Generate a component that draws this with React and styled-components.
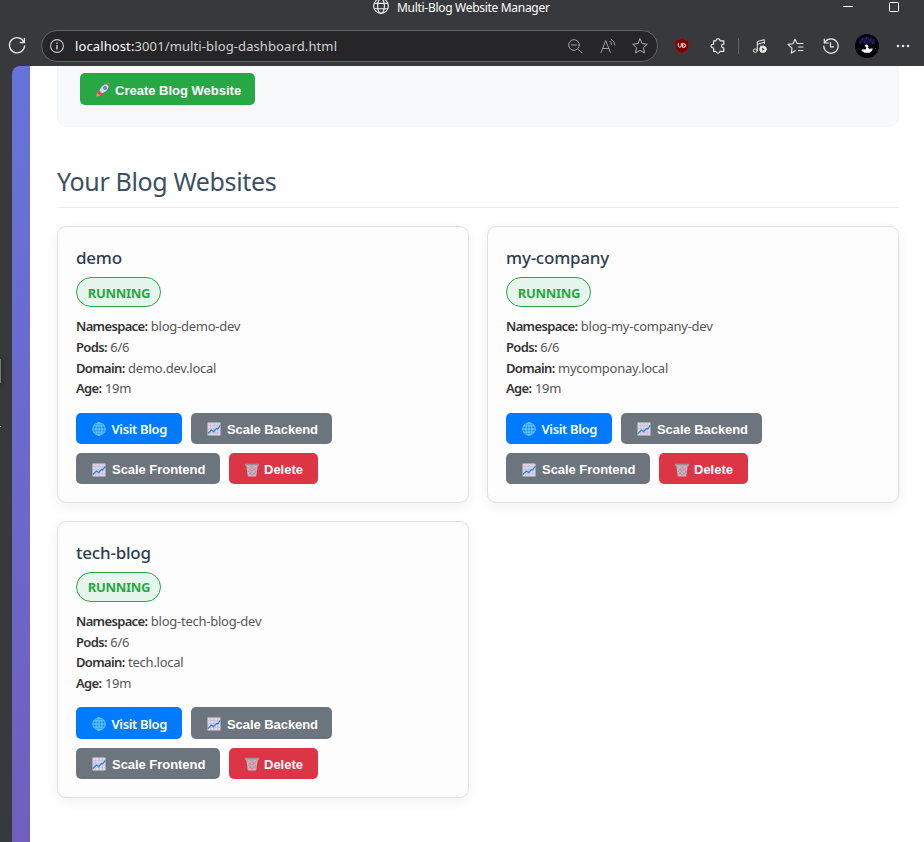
import React from 'react';
import styled, { createGlobalStyle } from 'styled-components';

const GlobalStyle = createGlobalStyle`
  * { box-sizing: border-box; }
  body { margin: 0; overflow: hidden; background: #38393c; font-family: "Noto Sans", "Open Sans", sans-serif; }
  svg { display: block; flex: none; fill: none; overflow: visible; }
`;

const Browser = styled.div`
  width: 924px;
  height: 842px;
  overflow: hidden;
  display: flex;
  flex-direction: column;
  background: #38393c;
`;
const TitleBar = styled.header`
  height: 30px;
  flex: none;
  display: flex;
  align-items: flex-start;
  padding-left: 373px;
  color: #fff;
`;
const TabTitle = styled.span`
  margin-left: 8px;
  flex: 1;
  white-space: nowrap;
  font-size: 12px;
  line-height: 15px;
  letter-spacing: -0.3px;
`;
const WindowButtons = styled.div`
  display: flex;
  gap: 34px;
  padding-right: 24px;
`;
const Toolbar = styled.nav`
  height: 36px;
  flex: none;
  display: flex;
  align-items: flex-start;
  padding-left: 8px;
`;
const IconSlot = styled.span`
  display: flex;
  align-items: center;
  justify-content: center;
  flex: none;
  height: 32px;
  width: ${(p) => p.$w}px;
  color: ${(p) => p.$color || '#e6e6e6'};
`;
const AddressBar = styled.div`
  width: 617px;
  height: 32px;
  margin-left: 15px;
  padding-right: 1px;
  flex: none;
  display: flex;
  align-items: center;
  border: 1px solid #626365;
  border-radius: 16px;
  background: #262628;
`;
const Url = styled.span`
  flex: 1;
  margin-left: 3px;
  white-space: nowrap;
  font-size: 13px;
  color: #d2d2d2;
  letter-spacing: 0.11px;
  b { font-weight: 400; color: #fff; }
`;
const Divider = styled.span`
  width: 1px;
  height: 16px;
  background: #626365;
`;
const Main = styled.div`
  flex: 1;
  min-height: 0;
  display: flex;
`;
const SideStrip = styled.div`
  width: 12px;
  flex: none;
  display: flex;
  flex-direction: column;
  padding-top: 293px;
`;
const Handle = styled.span`
  width: 1px;
  height: 24px;
  background: #77787a;
  box-shadow: 0 0 5px 1px #202022;
`;
const Tick = styled.span`
  width: 1px;
  height: 1px;
  margin-top: 43px;
  background: #b0b0b0;
`;
const Viewport = styled.div`
  flex: 1;
  padding-left: 18px;
  border-radius: 8px 0 0 0;
  overflow: hidden;
  background: linear-gradient(#6773d9, #705fbd);
`;
const Page = styled.main`
  height: 100%;
  padding: 0 25px 0 27px;
  background: #fff;
`;
const FormPanel = styled.section`
  height: 61px;
  padding: 7px 22px 0;
  background: #f8f9fb;
  border: 1px solid #f5f6f8;
  border-top: 0;
  border-radius: 0 0 10px 10px;
`;
const SectionTitle = styled.h2`
  height: 42px;
  margin: 39px 0 18px;
  border-bottom: 1px solid #ececec;
  font-size: 25px;
  font-weight: 400;
  line-height: 31px;
  letter-spacing: -0.36px;
  white-space: nowrap;
  color: #3b5064;
`;
const Grid = styled.div`
  display: grid;
  grid-template-columns: 412px 412px;
  gap: 18px;
`;
const Card = styled.article`
  height: 276.8px;
  padding: 18px;
  border: 1px solid #dfe0e2;
  border-radius: 9px;
  background: #fdfdfd;
  box-shadow: 0 4px 13px rgba(0, 0, 0, 0.06);
`;
const CardName = styled.h3`
  margin: 0 0 7px;
  height: 25px;
  line-height: 26px;
  font-size: 17px;
  font-weight: 500;
  letter-spacing: -0.22px;
  color: #2c3e50;
`;
const Status = styled.div`
  width: 85px;
  height: 30px;
  display: flex;
  align-items: center;
  justify-content: center;
  padding: 1px 0 0 1px;
  border: 1px solid #28a745;
  border-radius: 15px;
  background: #e6f6ec;
  color: #28a745;
  font-size: 13px;
  font-weight: 700;
  letter-spacing: -0.3px;
`;
const Details = styled.div`
  margin: 9px 0 13.6px;
  padding-top: 0.2px;
  font-size: 13px;
  line-height: 20.7px;
  letter-spacing: -0.25px;
  color: #555;
  strong { font-weight: 600; color: #333; letter-spacing: -0.65px; margin-right: 0.3px; }
`;
const Actions = styled.div`
  display: flex;
  flex-wrap: wrap;
  gap: 9px;
`;
const fills = { primary: '#007bff', neutral: '#6c757d', danger: '#dc3545', success: '#28a745' };
const Button = styled.button`
  width: ${(p) => p.$w}px;
  height: ${(p) => p.$h || 31.3}px;
  display: flex;
  align-items: center;
  gap: ${(p) => p.$gap || 5}px;
  padding: ${(p) => (p.$humanist ? 1 : 2)}px 0 0 16px;
  border: 0;
  border-radius: 5px;
  background: ${(p) => fills[p.$tone]};
  color: #fff;
  white-space: nowrap;
  font-family: ${(p) => (p.$humanist ? '"Noto Sans", sans-serif' : '"Liberation Sans", Arial, sans-serif')};
  font-size: 13px;
  font-weight: ${(p) => (p.$humanist ? 600 : 700)};
  letter-spacing: ${(p) => p.$track || 0}px;
`;

const Svg = ({ s = 16, w, h, vb, sw = 1, children }) => (
  <svg width={w || s} height={h || s} viewBox={vb || `0 0 ${w || s} ${h || s}`} stroke="currentColor" strokeWidth={sw} strokeLinecap="round" strokeLinejoin="round">
    {children}
  </svg>
);
const TabGlobe = () => (
  <svg width="16" height="14" viewBox="0 0 16 14" stroke="#f2f2f2" strokeWidth="1.1">
    <circle cx="8" cy="6" r="7.4" />
    <ellipse cx="8" cy="6" rx="3.4" ry="7.4" />
    <path d="M1.2 3.4h13.6M1.2 8.8h13.6" />
  </svg>
);
const Reload = () => (
  <Svg s={18} sw={1.3}><path d="M16 5.2A7.6 7.6 0 1 0 16.6 9M16.4 1.3v4.2h-4.2" /></Svg>
);
const Info = () => (
  <Svg s={14} sw={1.1}><circle cx="7" cy="7" r="6.4" /><path d="M7 6.5v3.4M7 4v.2" strokeWidth="1.5" /></Svg>
);
const ZoomOut = () => (
  <Svg s={15}><circle cx="6" cy="6" r="5.3" /><path d="M10 10l4 4M3.5 6h5" /></Svg>
);
const ReadAloud = () => (
  <Svg s={16}><path d="M1 14.5L5.7 2.5l4.7 12M2.7 10.5h6M10 3.2a4 4 0 0 1 1.5 3.3M10.9 1.1a7 7 0 0 1 4 6" /></Svg>
);
const starPath = 'M8 .9l2.2 4.7 5.1.6-3.8 3.5 1 5.2L8 12.4l-4.5 2.5 1-5.2L.7 6.2l5.1-.6z';
const Star = () => <Svg s={16}><path d={starPath} /></Svg>;
const Shield = () => (
  <Svg w={14} h={16}>
    <path d="M7 .7c2 1.4 4 1.8 6.4 1.8v5.7c0 3.4-2.7 5.4-6.4 7.2C3.3 13.6.6 11.6.6 8.2V2.5C3 2.5 5 2.1 7 .7z" fill="#7d0000" stroke="#9b1414" strokeWidth=".7" />
    <path d="M3.3 5.7v2a1.500 1.500 0 0 0 3 0v-2M7.700 5.700v3.600h1.100a1.800 1.800 0 0 0 0-3.600z" stroke="#fff" strokeWidth="1" />
  </Svg>
);
const Puzzle = () => (
  <Svg s={16} sw={1.2}><path d="M3.600 2.800h2.300c.3-2.600 3.900-2.600 4.200 0h3.700v3.400c-3-.6-3 4.200 0 3.600v3.500h-3.700c-.3 2.600-3.900 2.600-4.200 0H3.600V10C.2 10 .2 6.200 3.600 6.200z" /></Svg>
);
const Music = () => (
  <Svg s={16} sw={1}>
    <ellipse cx="3.3" cy="12.6" rx="2" ry="1.7" />
    <path d="M5.300 12.500V3.600l7-2v4M5.300 6.300l7-2M9 8v3" />
    <circle cx="11" cy="11.2" r="3.3" fill="currentColor" />
    <path d="M10.200 9.700v3l2.300-1.500z" fill="#38393c" stroke="none" />
  </Svg>
);
const Favorites = () => (
  <Svg w={17} h={16} sw={1.1}><path d="M8.200 12.700L4.300 15l.7-4.900L1 6.400l4.900-.6L8 1.200l2 4M10 5.500h6M11.500 9h4.500M11.500 12.500h4.500" /></Svg>
);
const History = () => (
  <Svg s={16} sw={1.2}><path d="M2.200 3.800A7.200 7.200 0 1 1 .8 8M1.300 1v4h4M7.500 4.500v4.400h3" /></Svg>
);
const Avatar = () => (
  <svg width="24" height="24" viewBox="0 0 24 24">
    <circle cx="12" cy="12" r="12" fill="#050507" />
    <path d="M3.500 7C7 2 17 2 20.500 7l-1 3.500-4-2-4 2.500-4-3-3 2z" fill="#17134f" />
    <path d="M7 5h1M11 4h1M15 6h1M9 8h1M17 9h1M5 9h1" stroke="#4840a0" />
    <path d="M9.500 11.500l2.500-1 1.500 1.500-.8 1.500 2 1.500 3-.8-.7 2.800-2.500 1.700H9.500l-3-2 .5-1.500 3.500.3 1-2z" fill="#fff" />
    <circle cx="20.500" cy="14.500" r=".5" fill="#b0524a" />
  </svg>
);
const More = () => (
  <Svg w={14} h={4}><g fill="currentColor" stroke="none"><circle cx="2" cy="2" r="1.3" /><circle cx="7" cy="2" r="1.3" /><circle cx="12" cy="2" r="1.3" /></g></Svg>
);

const Rocket = () => (
  <svg width="14" height="14" viewBox="0 0 14 14">
    <path d="M3.500 6.200L6 4.800l3.200 3.400-1.400 3.200-1.300 1.100-.4-3L3.700 7.400.8 8z" fill="#f1416c" />
    <path d="M3.500 7.700C5 3.200 8.600.8 13.300.5c-.1 4.800-2.800 8.200-7.200 9.800z" fill="#d8dcea" />
    <path d="M10 .9L13.300.5l-.3 3.300z" fill="#f1416c" />
    <circle cx="9" cy="4.9" r="1.7" fill="#4b9be8" stroke="#6673a0" strokeWidth=".6" />
    <path d="M3.300 8.600L.8 10.200.3 13.500l3.500-.6 1.500-2.300z" fill="#ff8a4a" />
    <path d="M3.300 8.600L1.400 10l2.300 2.200 1.600-1.600z" fill="#e93d68" />
  </svg>
);
const Globe = () => (
  <svg width="14" height="14" viewBox="0 0 14 14" stroke="#72d3ff" strokeWidth=".85">
    <circle cx="7" cy="7" r="6.2" fill="#168de2" />
    <ellipse cx="7" cy="7" rx="3" ry="6.2" />
    <path d="M7 .8v12.400M.8 7h12.400M1.700 3.900h10.600M1.700 10.100h10.600" />
  </svg>
);
const Chart = () => (
  <svg width="14" height="14" viewBox="0 0 14 14">
    <path d="M.5.5h13v13H.5z" fill="#ddd5e7" />
    <path d="M3.500.5v13M7 .5v13M10.500.5v13M.5 3.500h13M.5 7h13M.5 10.500h13" stroke="#c5b7d5" strokeWidth=".6" />
    <path d="M.8 11.500L4.500 8l2.200 1.600L9.500 6.500l1.300.3L13.500 3" stroke="#2587d4" strokeWidth="1.2" />
  </svg>
);
const Trash = () => (
  <svg width="14" height="14" viewBox="0 0 14 14">
    <path d="M1.300 2.500h11.400l-1.500 11H2.800z" fill="#c5b6c3" />
    <path d="M3 4.500l7.500 7.500M6 3.500l5.500 5.500M3.500 8.500l4 4M11 4.500L3.500 12M8 3.500L2.700 8.800M11 8.500l-4 4" stroke="#c45267" strokeWidth=".8" strokeDasharray="1 1" />
    <path d="M.3.8h13.400v2H.3z" fill="#b6b0bb" />
    <path d="M1 1.400h12" stroke="#807985" strokeWidth=".6" />
  </svg>
);

const sites = [
  { name: 'demo', namespace: 'blog-demo-dev', domain: 'demo.dev.local' },
  { name: 'my-company', namespace: 'blog-my-company-dev', domain: 'mycomponay.local' },
  { name: 'tech-blog', namespace: 'blog-tech-blog-dev', domain: 'tech.local' },
];

function SiteCard({ site }) {
  return (
    <Card>
      <CardName>{site.name}</CardName>
      <Status>RUNNING</Status>
      <Details>
        <div><strong>Namespace:</strong> {site.namespace}</div>
        <div><strong>Pods:</strong> 6/6</div>
        <div><strong>Domain:</strong> {site.domain}</div>
        <div><strong>Age:</strong> 19m</div>
      </Details>
      <Actions>
        <Button $tone="primary" $w={106} $gap={5.5} $humanist $track={-0.35}><Globe />Visit Blog</Button>
        <Button $tone="neutral" $w={141} $gap={6} $track={-0.06}><Chart />Scale Backend</Button>
        <Button $tone="neutral" $w={144} $gap={6} $track={-0.04}><Chart />Scale Frontend</Button>
        <Button $tone="danger" $w={89}><Trash />Delete</Button>
      </Actions>
    </Card>
  );
}

export default function App() {
  return (
    <Browser>
      <GlobalStyle />
      <TitleBar>
        <TabGlobe />
        <TabTitle>Multi-Blog Website Manager</TabTitle>
        <WindowButtons>
          <svg width="12" height="14" viewBox="0 0 12 14" stroke="#fff"><path d="M1 6.500h10" /></svg>
          <svg width="12" height="14" viewBox="0 0 12 14" stroke="#fff"><rect x="1.5" y="2.5" width="9" height="9" rx=".8" /></svg>
        </WindowButtons>
      </TitleBar>
      <Toolbar>
        <IconSlot $w={18}><Reload /></IconSlot>
        <AddressBar>
          <IconSlot $w={30} $color="#c8c8c8"><Info /></IconSlot>
          <Url><b>localhost:</b>3001/multi-blog-dashboard.html</Url>
          <IconSlot $w={32} $color="#a0a0a0"><ZoomOut /></IconSlot>
          <IconSlot $w={33} $color="#a0a0a0"><ReadAloud /></IconSlot>
          <IconSlot $w={32} $color="#b0b0b0"><Star /></IconSlot>
        </AddressBar>
        <IconSlot $w={48}><Shield /></IconSlot>
        <IconSlot $w={24}><Puzzle /></IconSlot>
        <IconSlot $w={17}><Divider /></IconSlot>
        <IconSlot $w={26}><Music /></IconSlot>
        <IconSlot $w={45}><Favorites /></IconSlot>
        <IconSlot $w={26}><History /></IconSlot>
        <IconSlot $w={46}><Avatar /></IconSlot>
        <IconSlot $w={26}><More /></IconSlot>
      </Toolbar>
      <Main>
        <SideStrip><Handle /><Tick /></SideStrip>
        <Viewport>
          <Page>
            <FormPanel>
              <Button $tone="success" $w={175} $h={32}><Rocket />Create Blog Website</Button>
            </FormPanel>
            <SectionTitle>Your Blog Websites</SectionTitle>
            <Grid>{sites.map((s) => <SiteCard key={s.name} site={s} />)}</Grid>
          </Page>
        </Viewport>
      </Main>
    </Browser>
  );
}
